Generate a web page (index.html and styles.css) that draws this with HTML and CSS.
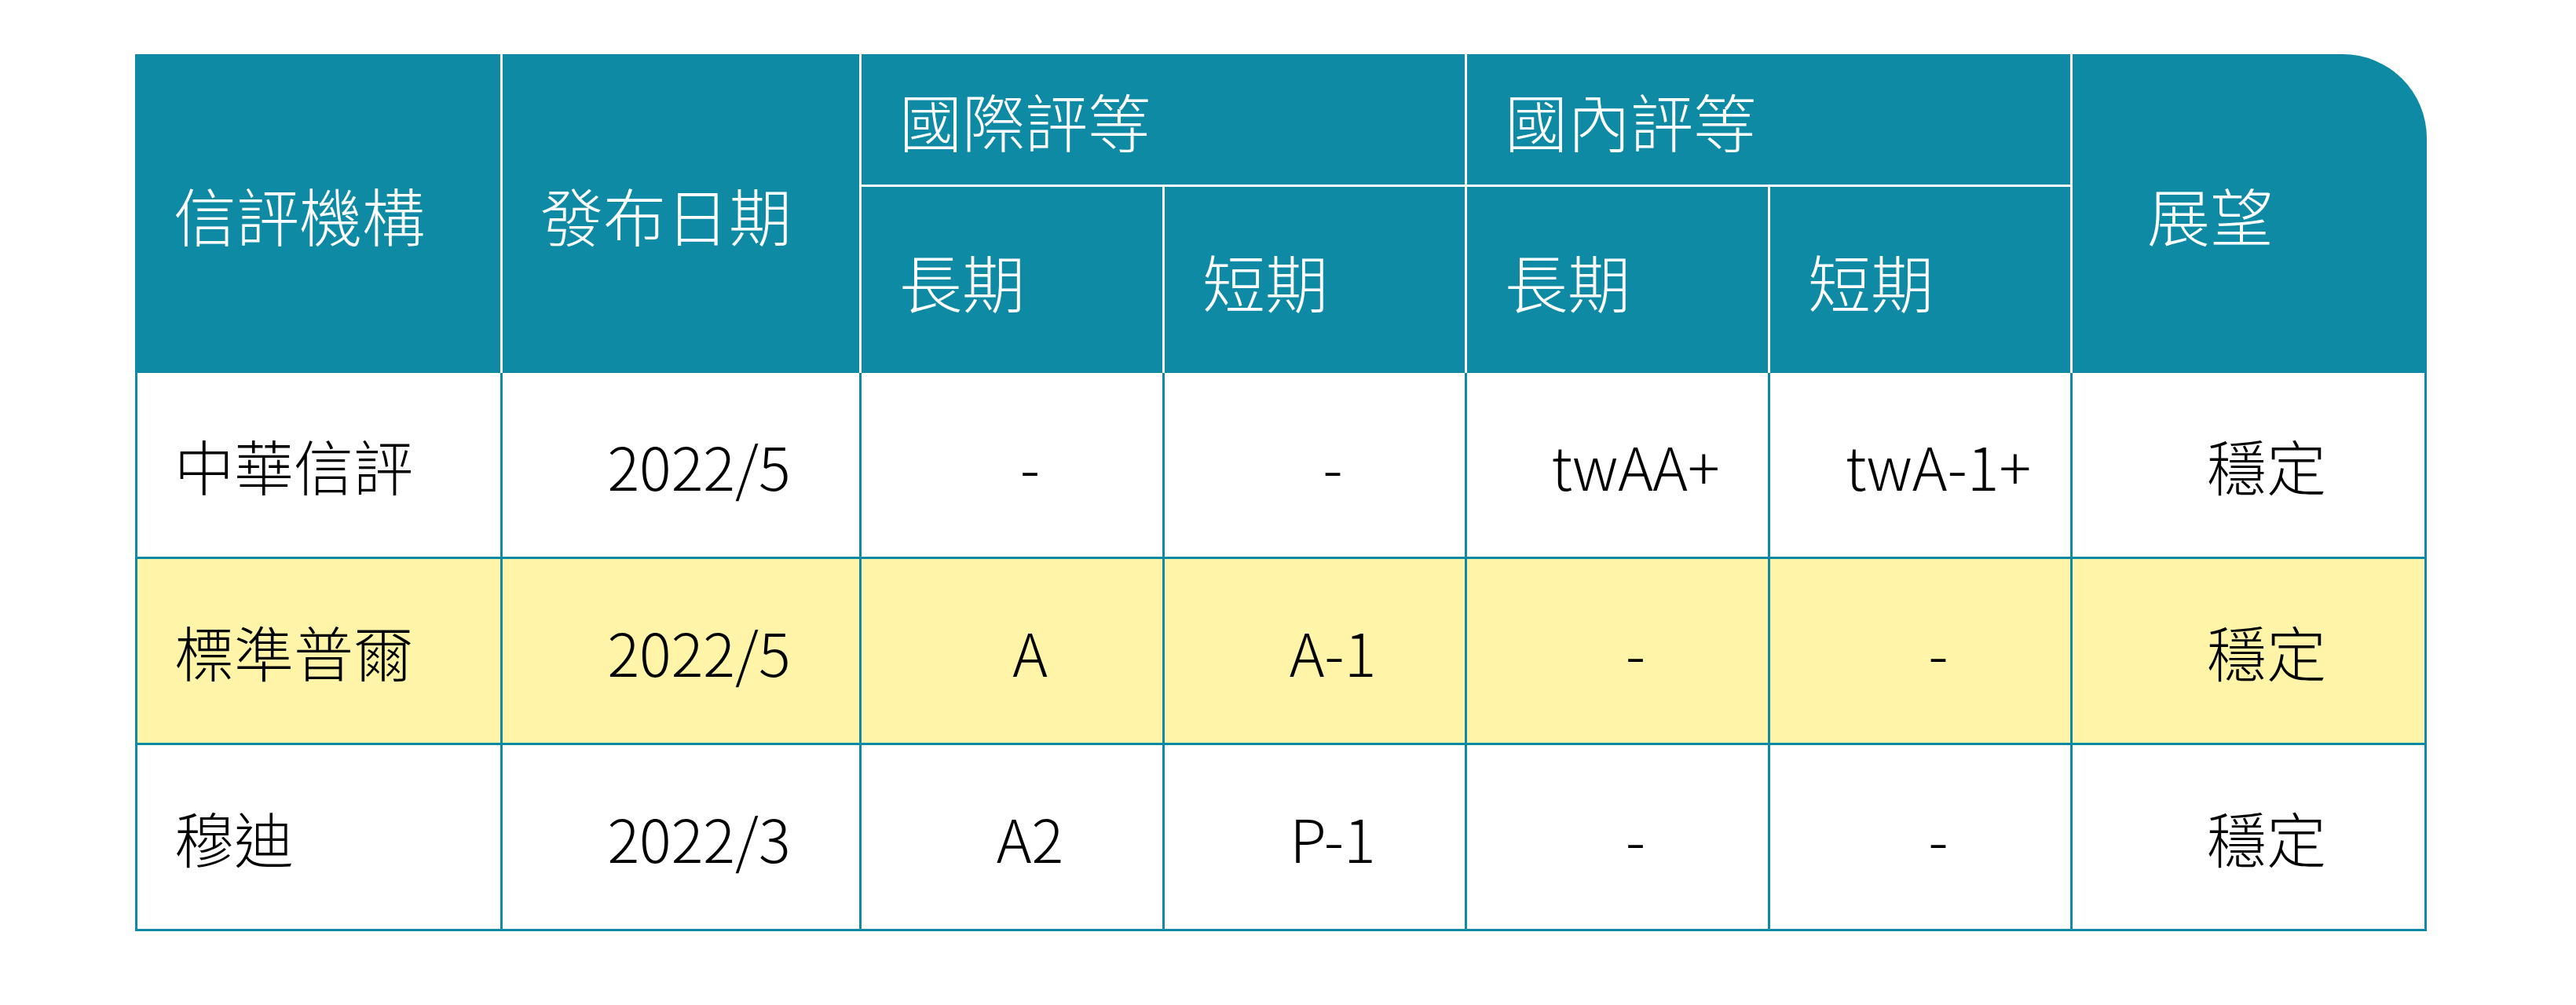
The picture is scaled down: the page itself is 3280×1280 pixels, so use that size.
FILE: index.html
```html
<!DOCTYPE html>
<html lang="zh-Hant">
<head>
<meta charset="utf-8">
<title>信評資料</title>
<link rel="stylesheet" href="styles.css">
</head>
<body>
<main class="page">
  <div class="rating-table" role="table">
    <div class="th th-first span-rows" role="columnheader">信評機構</div>
    <div class="th span-rows" role="columnheader">發布日期</div>
    <div class="th th-group span-cols" role="columnheader">國際評等</div>
    <div class="th th-group span-cols" role="columnheader">國內評等</div>
    <div class="th th-last span-rows" role="columnheader">展望</div>
    <div class="th" role="columnheader">長期</div>
    <div class="th" role="columnheader">短期</div>
    <div class="th" role="columnheader">長期</div>
    <div class="th" role="columnheader">短期</div>

    <div class="td td-first" role="cell">中華信評</div>
    <div class="td" role="cell">2022/5</div>
    <div class="td" role="cell">-</div>
    <div class="td" role="cell">-</div>
    <div class="td" role="cell">twAA+</div>
    <div class="td" role="cell">twA-1+</div>
    <div class="td" role="cell">穩定</div>

    <div class="td td-first hl" role="cell">標準普爾</div>
    <div class="td hl" role="cell">2022/5</div>
    <div class="td hl" role="cell">A</div>
    <div class="td hl" role="cell">A-1</div>
    <div class="td hl" role="cell">-</div>
    <div class="td hl" role="cell">-</div>
    <div class="td hl" role="cell">穩定</div>

    <div class="td td-first" role="cell">穆迪</div>
    <div class="td" role="cell">2022/3</div>
    <div class="td" role="cell">A2</div>
    <div class="td" role="cell">P-1</div>
    <div class="td" role="cell">-</div>
    <div class="td" role="cell">-</div>
    <div class="td" role="cell">穩定</div>
  </div>
</main>
</body>
</html>
```
FILE: styles.css
```css
html, body {
  margin: 0;
  padding: 0;
  background: #ffffff;
}

body {
  font-family: "Noto Sans CJK TC", "Noto Sans CJK SC", "Noto Sans", sans-serif;
  font-weight: 300;
  font-size: 80px;
  line-height: 1;
  color: #000000;
}

.page {
  padding: 69px 0 0 172px;
}

.rating-table {
  display: grid;
  grid-template-columns: 468px 457px 386px 385px 386px 385px 451px;
  grid-template-rows: 169px 237px 237px 237px 237px;
  width: 2918px;
}

.th,
.td {
  box-sizing: border-box;
  display: flex;
  align-items: center;
  white-space: nowrap;
}

.th {
  background: #0f8aa5;
  color: #ffffff;
  padding-left: 48px;
  border-right: 3px solid #ffffff;
}

.th-first {
  border-left: 3px solid #0f8aa5;
  padding-left: 46px;
}

.span-rows {
  grid-row: span 2;
}

.span-cols {
  grid-column: span 2;
}

.th-group {
  border-bottom: 3px solid #ffffff;
}

.th-last {
  border-right: none;
  padding-left: 95px;
  border-top-right-radius: 107px;
}

.td {
  font-size: 76px;
  justify-content: center;
  padding-left: 46px;
  border-right: 3px solid #0f8aa5;
  border-bottom: 3px solid #0f8aa5;
  background: #ffffff;
}

.td-first {
  justify-content: flex-start;
  border-left: 3px solid #0f8aa5;
  padding-left: 47px;
}

.hl {
  background: #fff4a8;
}
```
